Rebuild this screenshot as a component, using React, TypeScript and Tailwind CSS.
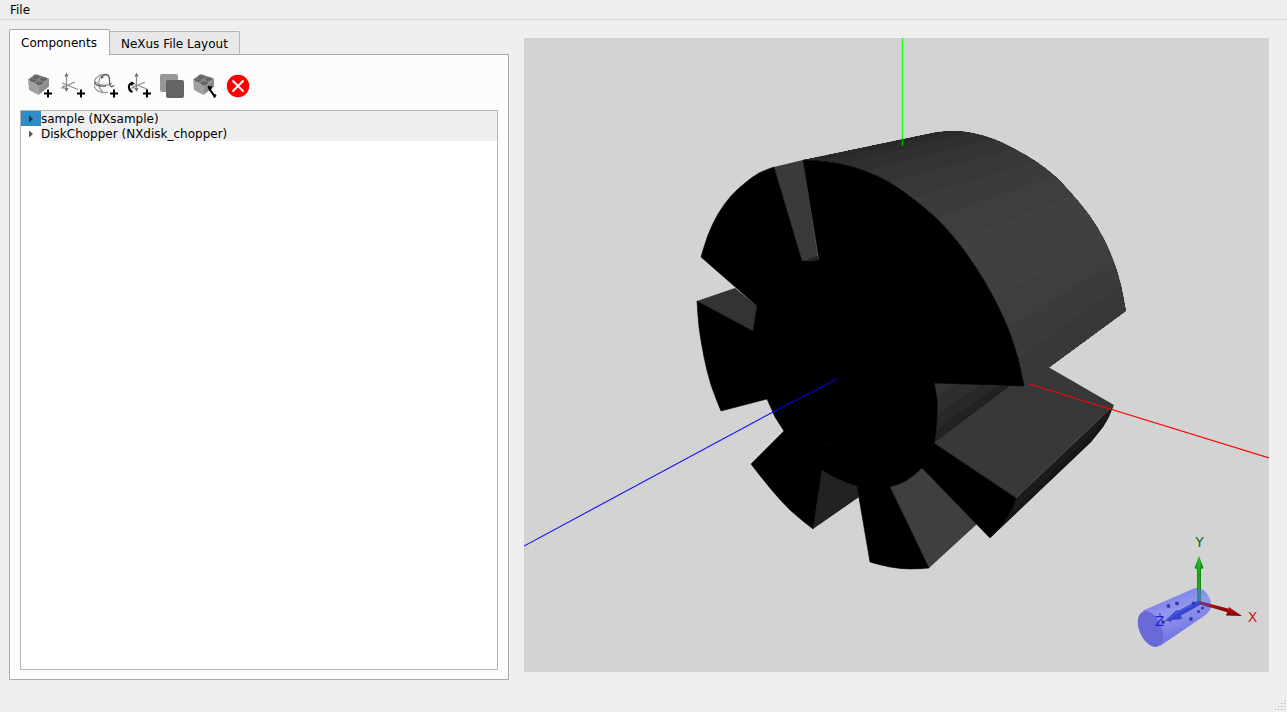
import { useState } from "react";
import type { ReactNode } from "react";

type Point = [number, number];

// Puts one point of a Catmull-Rom curve between each pair of points.
function refine(points: Point[]): Point[] {
  const last = points.length - 1;
  return points.flatMap((p, i) => {
    if (i === last) return [p];
    const before = points[Math.max(i - 1, 0)];
    const next = points[i + 1];
    const after = points[Math.min(i + 2, last)];
    const middle = (k: 0 | 1) => (9 * (p[k] + next[k]) - before[k] - after[k]) / 16;
    return [p, [middle(0), middle(1)] as Point];
  });
}

const frontArc = refine([
  [803, 160], [820, 161], [841, 164], [865, 171], [889, 182], [912, 198], [935, 217],
  [957, 241], [977, 269], [994, 298], [1008, 328], [1018, 358], [1024, 386],
]);

const backArc = refine([
  [937, 132], [955, 131], [973, 133], [994, 139], [1015, 149], [1037, 162], [1055, 176],
  [1073, 195], [1090, 216], [1104, 239], [1114, 262], [1121, 285], [1126, 311],
]);

const stripShades = [
  "#282828", "#2c2c2c", "#303030", "#343434", "#383838", "#3b3b3b",
  "#3e3e3e", "#404040", "#404040", "#3e3e3e", "#3b3b3b", "#383838",
];

const discOutline: Point[] = [
  ...frontArc,
  ...refine([[934, 383], [937, 400], [937, 415], [936, 430], [934, 443]]),
  ...refine([[1016, 498], [1009, 515], [990, 538]]),
  ...refine([[922, 468], [906, 481], [890, 487]]),
  ...refine([[929, 568], [910, 569], [890, 567], [870, 562]]),
  ...refine([[857, 486], [840, 480], [822, 470]]),
  ...refine([[813, 529], [790, 510], [770, 488], [751, 464]]),
  [784, 431], [775, 417], [767, 399],
  ...refine([[721, 411], [711, 385], [704, 357], [699, 327], [697, 301]]),
  [753, 331], [757, 306],
  ...refine([[701, 257], [708, 235], [718, 214], [731, 196], [745, 183], [759, 173], [774, 167]]),
  [802, 261], [819, 260],
];

const toPoints = (points: Point[]) => points.map((p) => p.join(",")).join(" ");

function Scene() {
  return (
    <svg
      role="img"
      aria-label="3D view of the instrument"
      viewBox="524 38 745 634"
      preserveAspectRatio="xMidYMid slice"
      className="block h-full w-full bg-[#d3d3d3]"
    >
      <defs>
        <linearGradient id="tube" x1="0" y1="0" x2="0.45" y2="1">
          <stop offset="0.1" stopColor="#7478e2" />
          <stop offset="0.5" stopColor="#9297ef" />
          <stop offset="0.9" stopColor="#7176e2" />
        </linearGradient>
        <linearGradient id="green" x1="0" y1="0" x2="1" y2="0">
          <stop offset="0" stopColor="#078307" />
          <stop offset="0.5" stopColor="#20bd20" />
          <stop offset="1" stopColor="#087808" />
        </linearGradient>
        <linearGradient id="red" x1="0" y1="0" x2="0" y2="1">
          <stop offset="0" stopColor="#c01818" />
          <stop offset="1" stopColor="#740404" />
        </linearGradient>
      </defs>

      <g>
        <polygon points={toPoints([...frontArc, ...[...backArc].reverse()])} fill="#383838" />
        <g shapeRendering="crispEdges">
          {frontArc.slice(1).map((corner, i) => (
            <polygon
              key={i}
              points={toPoints([frontArc[i], backArc[i], backArc[i + 1], corner])}
              fill={stripShades[Math.floor(i / 2)]}
            />
          ))}
        </g>
        <polygon points="934,383 1020,380 1048,367 1050,368 1114,405 1016,498 934,443" fill="#383838" />
        <g shapeRendering="crispEdges">
          <polygon points="934,383 956,384 937,396" fill="#333333" />
          <polygon points="956,384 981,385 937,415 937,396" fill="#2e2e2e" />
          <polygon points="981,385 997,386 937,430 937,415" fill="#282828" />
          <polygon points="997,386 1010,386 934,443 936,430" fill="#222222" />
        </g>
        <polygon points="1114,405 1109,417 1103,427 1091,442 990,538 1009,515 1016,498" fill="#1b1b1b" />
        <polygon points="1109,417 1103,427 1091,442 990,538 1003,522" fill="#161616" />
        <polygon points="697,301 735,288 757,306 753,331" fill="#333333" />
        <polygon points="774,167 803,160 818,257 802,261" fill="#3a3a3a" />
        <polygon points="822,470 840,480 857,486 859,497 813,529" fill="#222222" />
        <polygon points="890,487 906,481 922,468 977,524 929,568" fill="#3f3f3f" />
        <polygon fill="#000000" stroke="#000000" strokeWidth="0.6" points={toPoints(discOutline)} />
        <polygon points="802,261 818,256 819,260" fill="#222222" />
        <rect x="826" y="444" width="1" height="1" fill="#333333" />
        <rect x="821" y="277" width="1" height="1" fill="#222222" />
      </g>

      <g fill="none">
        <path d="M902.5 38V139" stroke="#1fff1f" strokeWidth="1.3" />
        <path d="M902.5 138V146" stroke="#00b800" strokeWidth="1.3" />
        <path d="M524 546L775 411" stroke="#1414f0" strokeWidth="1.1" />
        <path d="M775 411L837 379" stroke="#0000d0" strokeWidth="1.1" />
        <path d="M1029 384L1269 458" stroke="#f40808" strokeWidth="1.2" />
      </g>

      <g>
        <path d="M1143 610.500L1194 588.500C1203 586 1211 596 1211 605C1211 610 1208 613 1204 616L1160 646Z" fill="url(#tube)" />
        <ellipse cx="1150.500" cy="629" rx="11" ry="19" transform="rotate(-24 1150.500 629)" fill="#6a69da" />
        <rect x="1197" y="568" width="4" height="35" fill="url(#green)" />
        <rect x="1197" y="589" width="4" height="14" fill="#3f7bb0" opacity="0.85" />
        <path d="M1199 556L1203.500 568Q1199 571.500 1194.500 568Z" fill="url(#green)" />
        <path d="M1199 601L1230 609V613L1199 604Z" fill="url(#red)" />
        <path d="M1199 601L1210 604V607.500L1199 604Z" fill="#713375" />
        <path d="M1229 607L1242 616L1226 615.500Z" fill="url(#red)" />
        <path d="M1198 600.500L1179 610.500L1176 610.500L1165 621L1182 619L1181 615.500L1200 605Z" fill="#3944d0" />
        <path d="M1198 602L1178 612L1168 620" fill="none" stroke="#4a57df" strokeWidth="1.5" />
        <g fill="#373caa">
          <circle cx="1168.500" cy="606" r="1.900" />
          <circle cx="1177" cy="603.500" r="1.900" />
          <circle cx="1193.500" cy="603.500" r="1.900" />
          <circle cx="1198.500" cy="611.500" r="1.600" />
          <circle cx="1202.500" cy="608" r="1.600" />
          <circle cx="1191" cy="619" r="1.900" />
          <circle cx="1163" cy="622" r="1.900" />
          <circle cx="1160" cy="614.500" r="1" />
          <circle cx="1170" cy="620.500" r="1.300" />
        </g>
        <g className="font-['DejaVu_Sans',sans-serif] text-[14px]" textAnchor="middle">
          <text x="1199.500" y="547" fill="#126c12">Y</text>
          <text x="1252.500" y="622" fill="#d01818">X</text>
          <text x="1159.500" y="626" fill="#2020d8">Z</text>
        </g>
      </g>
    </svg>
  );
}

function Plus() {
  return <path d="M16 21.500H24M20 17.500V25.500" stroke="#000" strokeWidth="2" fill="none" />;
}

function Brick() {
  return (
    <g>
      <path d="M0 7.500L7.500 2L21 6.500L11 15Z" fill="#828282" />
      <path d="M0 7.500L11 15L10.500 23L1 18Z" fill="#a0a0a0" />
      <path d="M11 15L21 6.500V14.500L10.500 23Z" fill="#8c8c8c" />
      <g fill="#555">
        <ellipse cx="8.500" cy="4.700" rx="3" ry="1.700" />
        <ellipse cx="15.500" cy="6.900" rx="3" ry="1.700" />
        <ellipse cx="4.800" cy="8" rx="3" ry="1.700" />
        <ellipse cx="11.500" cy="10.900" rx="3" ry="1.700" />
      </g>
      <g fill="#707070">
        <ellipse cx="8.500" cy="4.100" rx="2.400" ry="1.200" />
        <ellipse cx="15.500" cy="6.300" rx="2.400" ry="1.200" />
        <ellipse cx="4.800" cy="7.400" rx="2.400" ry="1.200" />
        <ellipse cx="11.500" cy="10.300" rx="2.400" ry="1.200" />
      </g>
    </g>
  );
}

function Axes() {
  return (
    <g fill="none" stroke="#8b8b8b" strokeWidth="1.200">
      <path d="M5.500 2V18.500M1.500 15.500L14 10M1 11L17 17.500" />
      <path d="M4 4.500L5.500 2L7 4.500M4 16L5.500 18.500L7 16" stroke="#666" />
      <path d="M3 13.500L1 16L4.500 16" />
    </g>
  );
}

const tools: { label: string; art: ReactNode }[] = [
  { label: "Add component", art: <g><Brick /><Plus /></g> },
  { label: "Add translation", art: <g><Axes /><Plus /></g> },
  {
    label: "Add rotation",
    art: (
      <g>
        <g fill="none" stroke="#999" strokeWidth="1.200">
          <path d="M15 3.500C8 0 0 5 0 12C0 18 6 22 14 20M9 2C3 6 4 17 9 20" />
          <path d="M1 9C5 14 15 14 18 11" />
        </g>
        <path d="M8 5C11 1 15 2 15.500 7V11C16 15 18 16 20 13M1 10C1 14 7 14.500 12 14" fill="none" stroke="#5d5d5d" strokeWidth="1.300" />
        <path d="M7 4.500L7 7L10 5Z" fill="#555" />
        <Plus />
      </g>
    ),
  },
  {
    label: "Add transformation link",
    art: (
      <g>
        <g transform="translate(4 0)"><Axes /></g>
        <path d="M6 11.500C1.500 11 0.500 16 4 19" fill="none" stroke="#000" strokeWidth="2" />
        <path d="M3.500 9.500L7.500 11L4.500 14ZM1 18.500H6L5 21Z" fill="#000" />
        <Plus />
      </g>
    ),
  },
  {
    label: "Duplicate",
    art: (
      <g>
        <rect x="0" y="2" width="18" height="18" rx="2" fill="#989898" />
        <rect x="6" y="8" width="18" height="18" rx="2" fill="#646464" />
      </g>
    ),
  },
  {
    label: "Edit component",
    art: (
      <g>
        <Brick />
        <path d="M15.500 14L16.500 17L21 23.500L22 25.500M18.500 14L17.500 17M21 22.500L23 24" fill="none" stroke="#000" strokeWidth="2" />
      </g>
    ),
  },
  {
    label: "Delete",
    art: (
      <g>
        <circle cx="12" cy="14" r="11.200" fill="#fe0000" />
        <path d="M6.500 8.500L17.500 19.500M17.500 8.500L6.500 19.500" stroke="#fff" strokeWidth="2" />
      </g>
    ),
  },
];

const items = ["sample (NXsample)", "DiskChopper (NXdisk_chopper)"];

function Grip() {
  const dots: Point[] = [[9, 0], [6, 3], [9, 3], [3, 6], [6, 6], [9, 6], [0, 9], [3, 9], [6, 9], [9, 9]];
  return (
    <svg aria-hidden="true" className="h-[11px] w-[11px]" viewBox="0 0 11 11">
      {dots.map(([x, y]) => <rect key={`${x}-${y}`} x={x} y={y} width="1" height="1" fill="#b2b2b2" />)}
    </svg>
  );
}

export default function App() {
  const [selected, setSelected] = useState(0);
  return (
    <div className="flex min-h-screen flex-col bg-[#efefef] font-['DejaVu_Sans',sans-serif] text-[12px] leading-[15px] text-black">
      <header className="h-5 border-b border-[#d4d4d4] px-2.5 pt-[3px]">
        <button type="button" className="block">File</button>
      </header>

      <main className="grid flex-1 grid-cols-[500fr_745fr] gap-[15px] pr-[18px] pl-[9px]">
        <section className="flex flex-col pt-[9px]">
          <div role="tablist" className="flex items-end">
            <button
              type="button"
              role="tab"
              aria-selected="true"
              className="z-10 -mb-px h-[26px] rounded-t-[2px] border border-b-0 border-[#ababab] bg-[#fcfcfc] pt-px pr-3 pl-[11px]"
            >
              Components
            </button>
            <button
              type="button"
              role="tab"
              aria-selected="false"
              className="h-[23px] rounded-tr-[2px] border border-b-0 border-l-0 border-[#b6b6b6] bg-[#e8e8e8] pt-0.5 pr-[11px] pl-[11px]"
            >
              NeXus File Layout
            </button>
          </div>
          <div className="flex flex-1 flex-col border border-[#ababab] bg-[#fcfcfc] px-2.5 pt-[17px] pb-[9px]">
            <div role="toolbar" aria-label="Component tools" className="flex gap-[5px] px-2 pb-2.5">
              {tools.map((tool) => (
                <button key={tool.label} type="button" aria-label={tool.label} className="h-7 w-7">
                  <svg viewBox="0 0 28 28" className="block h-7 w-7">{tool.art}</svg>
                </button>
              ))}
            </div>
            <ul role="tree" aria-label="Components" className="flex-1 border border-[#b5b5b5] bg-white">
              {items.map((item, i) => (
                <li key={item} role="treeitem" aria-selected={selected === i}>
                  <button type="button" onClick={() => setSelected(i)} className="flex w-full text-left">
                    <span className={selected === i ? "flex h-[15px] w-5 items-center justify-center bg-[#308cc6]" : "flex h-[15px] w-5 items-center justify-center"}>
                      <svg viewBox="0 0 4 8" className={selected === i ? "h-2 w-1 fill-[#16384c]" : "h-2 w-1 fill-[#555555]"}>
                        <path d="M0 0.500L4 4L0 7.500Z" />
                      </svg>
                    </span>
                    <span className="h-[15px] flex-1 bg-[#efefef] pt-px">{item}</span>
                  </button>
                </li>
              ))}
            </ul>
          </div>
        </section>
        <section className="flex pt-[18px]">
          <div className="-mb-2 flex-1 pb-4">
            <Scene />
          </div>
        </section>
      </main>

      <footer className="flex h-8 items-end justify-end pr-px pb-px">
        <Grip />
      </footer>
    </div>
  );
}
